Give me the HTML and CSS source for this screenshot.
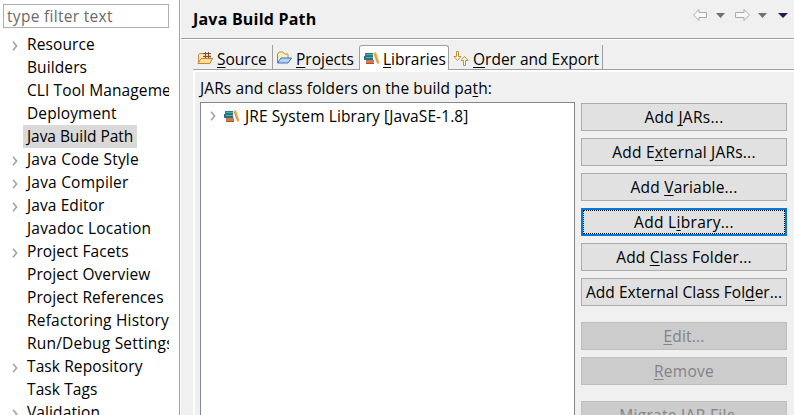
FILE: index.html
```html
<!DOCTYPE html>
<html lang="en">
<head>
<meta charset="utf-8">
<title>Java Build Path</title>
<link rel="stylesheet" href="styles.css">
</head>
<body>
<svg width="0" height="0" class="defs">
  <symbol id="chev" viewBox="0 0 6 10"><path d="M1 .8L4.6 5 1 9.2" fill="none" stroke="#a3a3a3" stroke-width="1.6"/></symbol>
  <symbol id="books" viewBox="0 0 16 14">
    <path d="M1 2h8v3H1z" fill="#23827a"/><path d="M2 3.500h7" stroke="#4fae94"/>
    <path d="M0 5h9v4H0z" fill="#2b6f8c"/><path d="M2 6.500h7" stroke="#5fb0a0"/>
    <path d="M2 9h8v4H2z" fill="#cf7a48"/><path d="M2 12.500h8" stroke="#a8552f"/>
    <path d="M10 2L12 1l3.500 11-1.500.8z" fill="#f0ab42"/><path d="M10 2.500l3.700 10" stroke="#d98a2c"/>
  </symbol>
</svg>
<div class="dialog">
  <nav class="side">
    <div class="filter">type filter text</div>
    <ul class="tree">
      <li><svg><use href="#chev"/></svg><span>Resource</span></li>
      <li><span>Builders</span></li>
      <li><span>CLI Tool Management</span></li>
      <li><span>Deployment</span></li>
      <li><span class="selected">Java Build Path</span></li>
      <li class="wide"><svg><use href="#chev"/></svg><span>Java Code Style</span></li>
      <li class="wide"><svg><use href="#chev"/></svg><span>Java Compiler</span></li>
      <li><svg><use href="#chev"/></svg><span>Java Editor</span></li>
      <li class="wide"><span>Javadoc Location</span></li>
      <li><svg><use href="#chev"/></svg><span>Project Facets</span></li>
      <li><span>Project Overview</span></li>
      <li><span>Project References</span></li>
      <li class="wide"><span>Refactoring History</span></li>
      <li class="wide"><span>Run/Debug Settings</span></li>
      <li><svg><use href="#chev"/></svg><span>Task Repository</span></li>
      <li><span>Task Tags</span></li>
      <li><svg><use href="#chev"/></svg><span>Validation</span></li>
    </ul>
  </nav>
  <main class="page">
    <header class="head">
      <h1>Java Build Path</h1>
      <svg class="history" width="102" height="14" viewBox="0 0 102 14">
        <g fill="#f8f8f8" stroke="#aaa" stroke-linejoin="round"><path d="M1.500 7L7 1.500V4.500h7.500v5H7v3z"/><path d="M57.500 7L52 1.500v3h-8.500v5H52v3z"/></g>
        <path d="M24 5h9l-4.500 5zM66 5h9l-4.500 5z" fill="#707070"/>
        <path d="M86 5h10l-5 5z" fill="#2d174b"/>
      </svg>
    </header>
    <div class="tabs">
      <div class="tab source">
        <svg width="16" height="14" viewBox="0 0 16 14"><path d="M1.500 11V4l1-1.500h4L7.500 4H13v7z" fill="#f7e6c0" stroke="#c98f48"/><path d="M6.500 2h6v5h-6z" fill="#edd5b0"/><path d="M6 2.500h8M6 5.500h8M8.500 1v6M11.500 1v6" stroke="#805039"/><path d="M1 12.500l3-5h11.500L13 12.500z" fill="#fbdc98" stroke="#c98436"/></svg>
        <span><u>S</u>ource</span>
      </div>
      <div class="tab projects">
        <svg width="16" height="14" viewBox="0 0 16 14"><path d="M1.500 11.500V3L3 1h4l1.500 2H12v5" fill="#fbeec0" stroke="#b89548"/><path d="M1.500 3v9" stroke="#5c86c5"/><path d="M1.500 12l3.500-5h10.500L12 12z" fill="#b0d4fb" stroke="#3e71bd"/></svg>
        <span><u>P</u>rojects</span>
      </div>
      <div class="tab libraries active">
        <svg width="16" height="14"><use href="#books"/></svg>
        <span><u>L</u>ibraries</span>
      </div>
      <div class="tab order">
        <svg width="16" height="15" viewBox="0 0 16 15"><g fill="#fffbd9" stroke="#c29037" stroke-linejoin="round"><path d="M3.500.5h2v5H8L4.500 9.500 1 5.500h2.500z"/><path d="M10.500 14.500h2v-5H15l-3.500-4-3.500 4h2.500z"/></g></svg>
        <span><u>O</u>rder and Export</span>
      </div>
    </div>
    <section class="panel">
      <p class="caption">JARs and class folders on the build pa<u>t</u>h:</p>
      <div class="content">
        <div class="list">
          <div class="entry">
            <svg class="chevron"><use href="#chev"/></svg>
            <svg width="16" height="14"><use href="#books"/></svg>
            <span>JRE System Library [JavaSE-1.8]</span>
          </div>
        </div>
        <div class="buttons">
          <button class="wide"><span>Add <u>J</u>ARs...</span></button>
          <button><span>Add E<u>x</u>ternal JARs...</span></button>
          <button><span>Add <u>V</u>ariable...</span></button>
          <button class="focused wide"><span>Add L<u>i</u>brary...</span></button>
          <button><span>Add <u>C</u>lass Folder...</span></button>
          <button class="long"><span>Add External Class Fol<u>d</u>er...</span></button>
          <button class="gap" disabled><span><u>E</u>dit...</span></button>
          <button class="wide" disabled><span><u>R</u>emove</span></button>
          <button class="gap wide" disabled><span>Migrate JAR File...</span></button>
        </div>
      </div>
    </section>
  </main>
</div>
</body>
</html>
```
FILE: styles.css
```css
* { box-sizing: border-box; }
body { margin: 0; overflow: hidden; }
.defs { display: block; }
.dialog {
  display: flex;
  width: 794px;
  height: 415px;
  overflow: hidden;
  background: #f0f0f0;
  color: #000;
  font: 15.5px/23px "Open Sans", "Noto Sans", sans-serif;
  letter-spacing: 0.1px;
  white-space: nowrap;
}
u { text-underline-offset: 2px; text-decoration-thickness: 1px; text-decoration-skip-ink: none; }
.side {
  flex: 0 0 180px;
  min-width: 0;
  padding: 4px 10px 0 3px;
  background: #fff;
  border-right: 1px solid #a0a0a0;
}
.filter {
  height: 24px;
  padding-left: 3px;
  border: 1px solid #abadb3;
  color: #6a6a6a;
  letter-spacing: 0.3px;
  line-height: 23px;
}
.tree { margin: 5px 0 0; padding: 0; list-style: none; overflow: hidden; }
.tree li { position: relative; height: 23px; padding-left: 20px; }
.tree li svg { position: absolute; left: 9px; top: 8px; width: 6px; height: 10px; }
.tree li span { display: inline-block; height: 23px; padding: 0 4px; }
.tree .wide { letter-spacing: 0.2px; }
.tree .selected { width: 114px; background: #d9d9d9; letter-spacing: -0.05px; }
.page { flex: 1; min-width: 0; border-left: 1px solid #fff; }
.head {
  display: flex;
  justify-content: space-between;
  height: 40px;
  padding: 8px 0 0 12px;
  border-bottom: 1px solid #fff;
  box-shadow: inset 0 -1px #a0a0a0;
}
h1 { margin: 0; font-size: 16px; line-height: 23px; letter-spacing: 0.2px; }
.history { display: block; }
.tabs {
  display: flex;
  height: 30px;
  margin-left: 12px;
  padding-top: 5px;
  box-shadow: inset 0 -1px #a0a0a0;
}
.tab {
  display: flex;
  gap: 4px;
  padding: 6px 0 0 4px;
  border-right: 1px solid #a0a0a0;
  letter-spacing: 0;
  line-height: 17px;
}
.source { width: 80px; }
.projects { width: 86px; padding-left: 3px; border-right: 0; }
.libraries { width: 90px; }
.order { width: 154px; }
.active {
  background: #fff;
  border: 1px solid #a0a0a0;
  border-bottom: 0;
  border-radius: 3px 3px 0 0;
  gap: 3px;
  padding: 5px 0 0 4px;
}
.panel {
  height: 345px;
  margin-left: 12px;
  padding: 5px 6px 0 5px;
  border-top: 2px solid #fff;
  border-left: 2px solid #fff;
}
.caption { margin: 0; height: 25px; line-height: 23px; }
.content { display: flex; gap: 6px; }
.list {
  flex: 0 0 375px;
  height: 330px;
  border: 1px solid #828790;
  background: #fff;
}
.entry { display: flex; padding: 2px 0 0 9px; line-height: 23px; }
.entry svg { margin-top: 4px; }
.entry .chevron { width: 6px; height: 10px; margin: 6px 8px 0 0; }
.entry span { margin-left: 5px; }
.buttons { display: flex; flex: 0 0 206px; flex-direction: column; gap: 7px; padding-top: 1px; }
button {
  flex: 0 0 28px;
  padding: 0;
  border: 1px solid #adadad;
  background: #e1e1e1;
  color: #000;
  font: inherit;
  letter-spacing: 0.2px;
  line-height: 26px;
}
button span { display: block; height: 26px; }
button.wide { letter-spacing: 0.3px; }
button.long { letter-spacing: 0.03px; }
.focused { border: 2px solid #0078d7; line-height: 24px; }
.focused span { height: 24px; border: 1px dotted #000; line-height: 22px; }
button:disabled { border-color: #bfbfbf; background: #ccc; color: #838383; }
.gap { margin-top: 9px; }
```
